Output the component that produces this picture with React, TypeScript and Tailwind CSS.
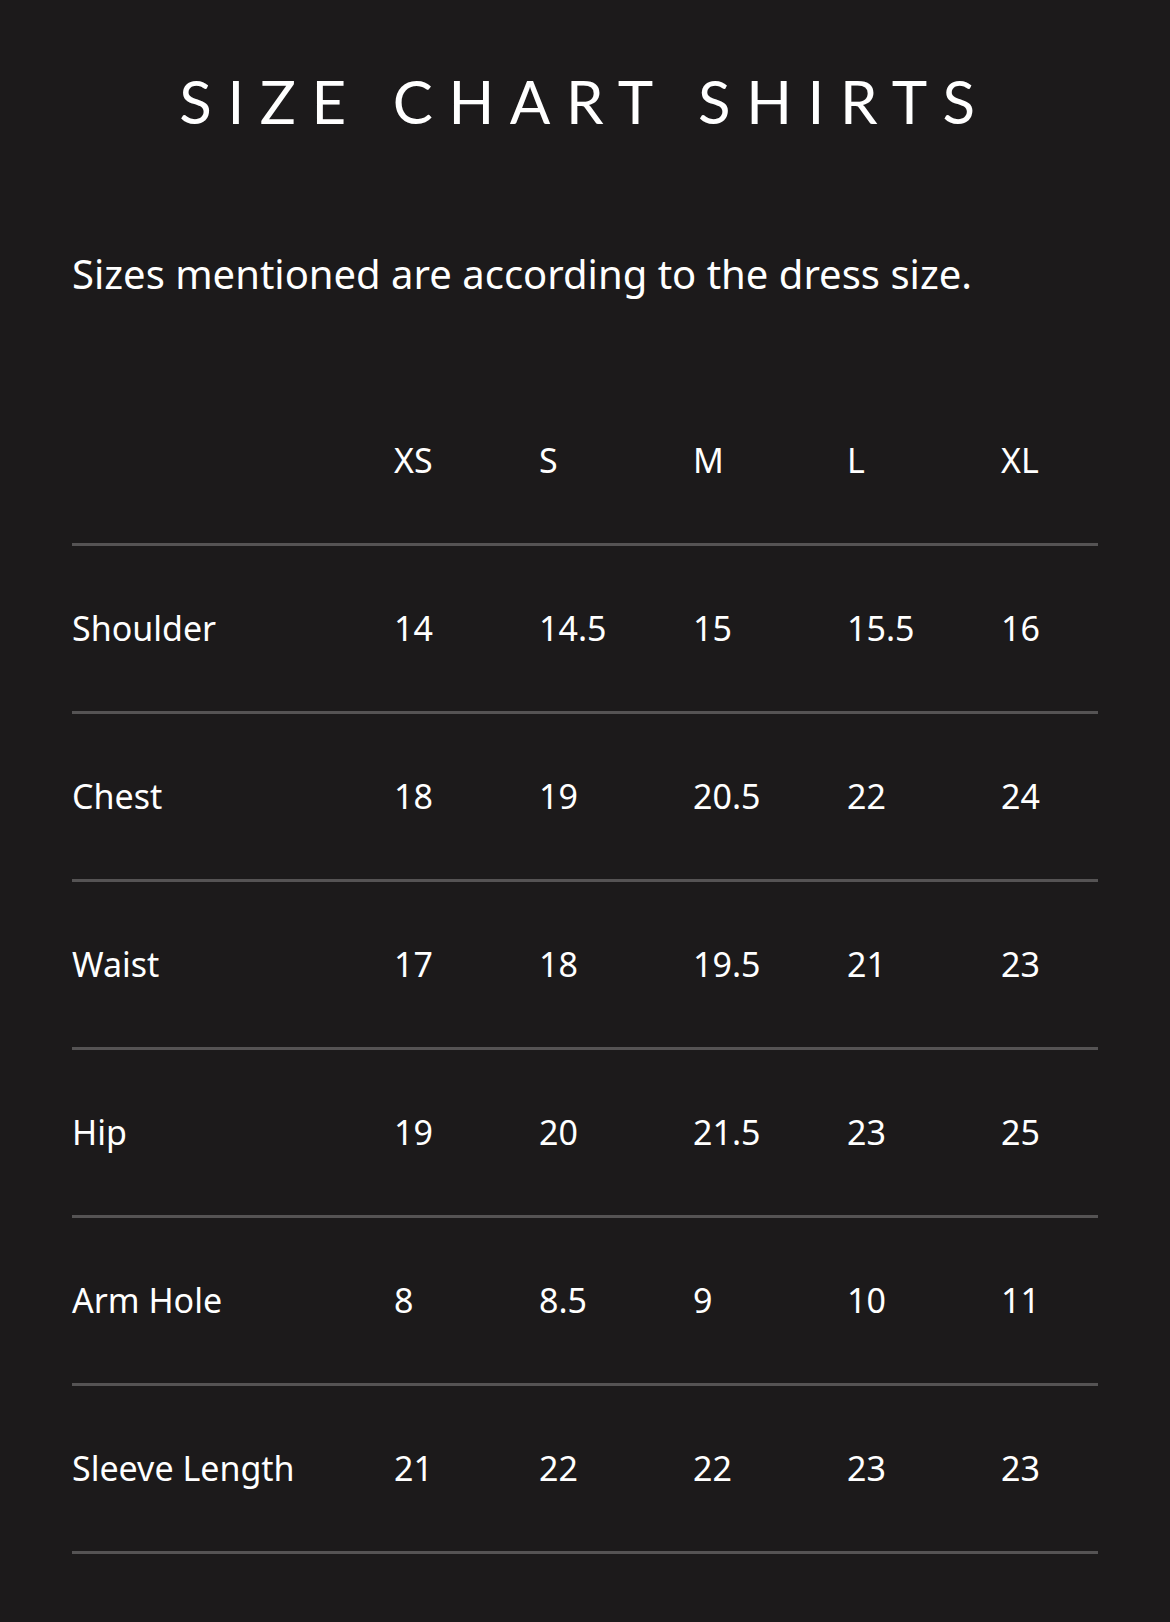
const sizes = ["XS", "S", "M", "L", "XL"]

const rows: [string, string[]][] = [
  ["Shoulder", ["14", "14.5", "15", "15.5", "16"]],
  ["Chest", ["18", "19", "20.5", "22", "24"]],
  ["Waist", ["17", "18", "19.5", "21", "23"]],
  ["Hip", ["19", "20", "21.5", "23", "25"]],
  ["Arm Hole", ["8", "8.5", "9", "10", "11"]],
  ["Sleeve Length", ["21", "22", "22", "23", "23"]],
]

const cols = "grid grid-cols-[322px_145px_154px_154px_154px_1fr] items-center"

export default function App() {
  return (
    <div className="min-h-[1622px] bg-[#1c1a1b] px-[72px] pb-[68px] text-white font-['Lato',sans-serif]">
      <h1 className="pt-[71px] text-center text-[60px] leading-[60px] tracking-[0.26em] font-normal">
        SIZE CHART SHIRTS
      </h1>

      <p className="mt-[119px] text-[40px] leading-[48px] font-['Noto_Sans','Lato',sans-serif]">
        Sizes mentioned are according to the dress size.
      </p>

      <div className="mt-[80px] text-[34px] font-['Noto_Sans','Lato',sans-serif]">
        <div className={`${cols} h-[168px] border-b-[3px] border-[#555354]`}>
          <div />
          {sizes.map((s) => (
            <div key={s}>{s}</div>
          ))}
        </div>
        {rows.map(([label, vals]) => (
          <div key={label} className={`${cols} h-[168px] border-b-[3px] border-[#555354]`}>
            <div>{label}</div>
            {vals.map((v, i) => (
              <div key={i}>{v}</div>
            ))}
          </div>
        ))}
      </div>
    </div>
  )
}
